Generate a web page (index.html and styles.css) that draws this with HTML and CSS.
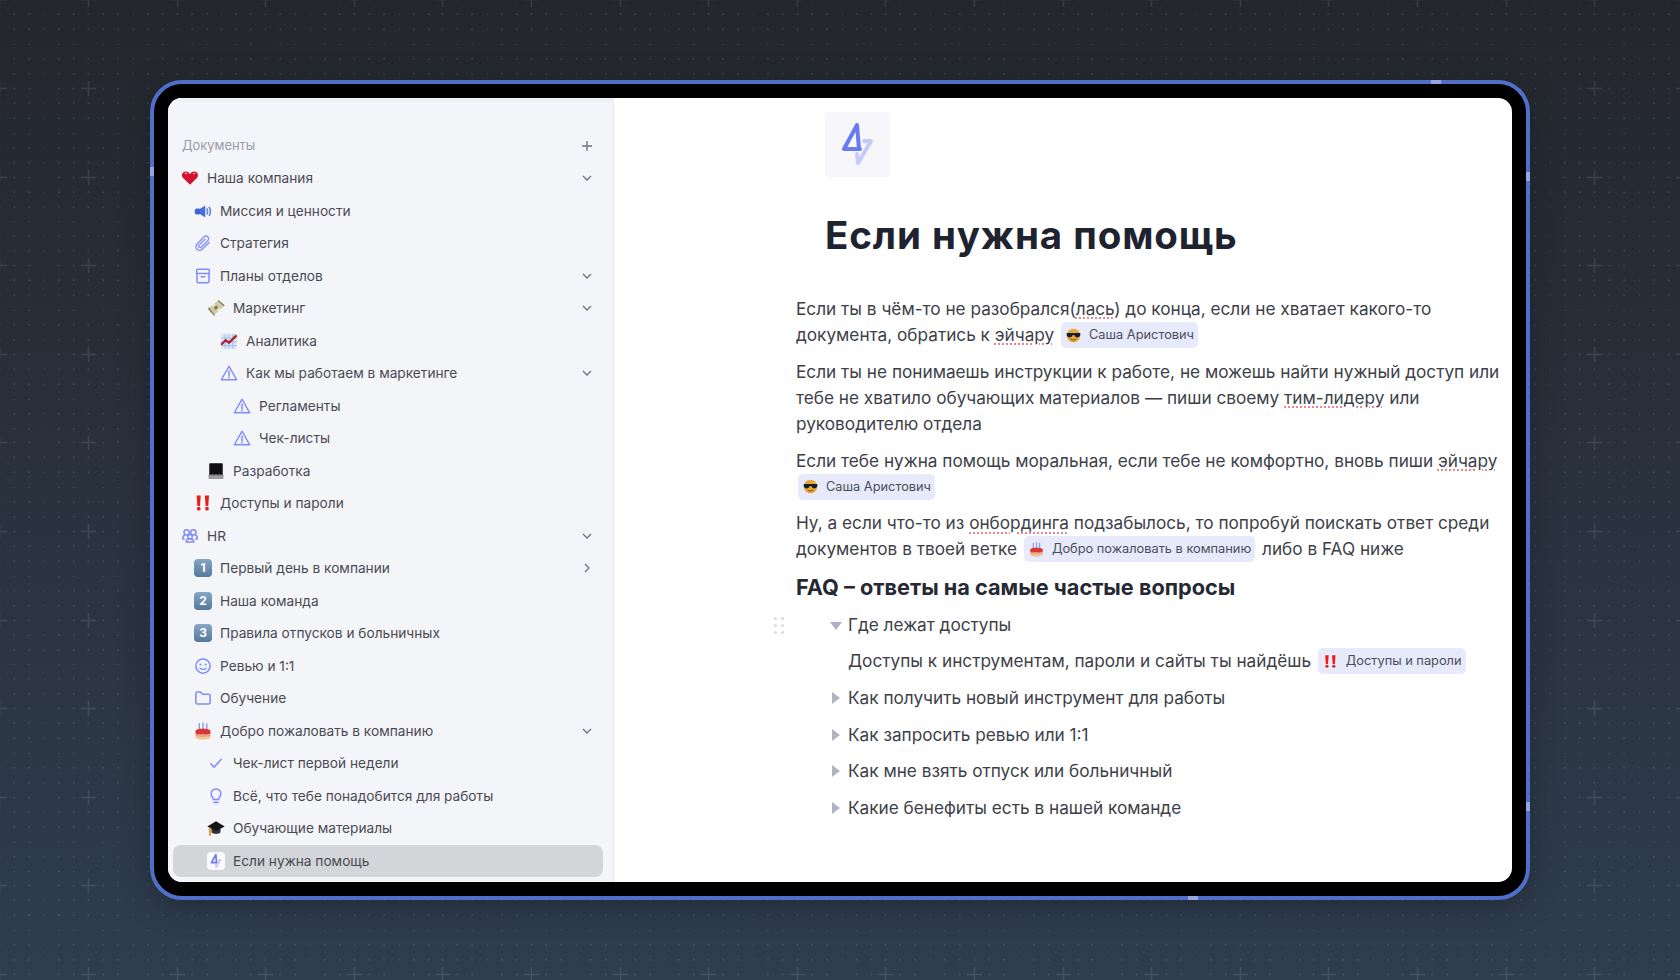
FILE: index.html
```html
<!DOCTYPE HTML><html lang="ru">
<head>
  <title>Если нужна помощь</title>
  <meta name="viewport" content="width=device-width, initial-scale=1">
  <link rel="stylesheet" href="styles.css">
</head>
<body>
  <svg class="sprite" aria-hidden="true">
    <symbol id="i-heart" viewBox="0 0 24 24"><path d="M12 21 2.500 11.500C.5 9 1 4.500 5 3.600 8 3 10.500 4.500 12 7c1.500-2.500 4-4 7-3.400 4 .9 4.500 5.400 2.500 7.900z" fill="#d2122e"/><path d="M5 6.500c1-1 2.500-1 3.500-.2M16 6.300c1-.6 2-.6 3 0" stroke="#f7a3ae" stroke-width="1.500" fill="none"/></symbol>
    <symbol id="i-horn" viewBox="0 0 24 24"><rect x="1" y="8.500" width="8" height="8" rx="3" fill="#3f63d8"/><path d="M8 9 15 4.500v16L8 16z" fill="#4a6ee0"/><path d="M17 8.500c1.500 2.500 1.500 5.500 0 8M20 6.500c2.300 3.500 2.300 8.500 0 12" stroke="#5c7de6" stroke-width="2" fill="none"/></symbol>
    <symbol id="i-clip" viewBox="0 0 24 24"><path d="M20 11.500 11.500 20c-2.300 2.300-5.600 2.300-7.500.4s-1.900-5.200.4-7.500L13.200 4c1.600-1.600 3.900-1.600 5.300-.2s1.400 3.700-.2 5.300l-8.400 8.400c-.9.9-2.200.9-3 .1s-.8-2.100.1-3l7.600-7.600" stroke="#8b97f5" stroke-width="2" fill="none" stroke-linecap="round"/></symbol>
    <symbol id="i-box" viewBox="0 0 24 24"><path d="M3.500 8.500V4.500a1.500 1.500 0 0 1 1.500-1.500h14a1.500 1.500 0 0 1 1.500 1.500v4zM4 8.500V19a2 2 0 0 0 2 2h12a2 2 0 0 0 2-2V8.500M9.500 13h5" stroke="#7f8cfb" stroke-width="2" fill="none" stroke-linecap="round" stroke-linejoin="round"/></symbol>
    <symbol id="i-money" viewBox="0 0 24 24"><path d="M1 13 15 2l8 7L9 22z" fill="#d3cba6"/><path d="M1 13l8 9 2 0L3 11z" fill="#8f8a6a"/><path d="M8 7.500 17 16" stroke="#f3ecca" stroke-width="4"/><circle cx="12" cy="11.500" r="2.700" fill="#86805c"/><path d="m15 2 8 7" stroke="#77795c" stroke-width="1.500"/></symbol>
    <symbol id="i-chart" viewBox="0 0 24 24"><rect x="1.500" y="2.500" width="21" height="20" fill="#dbe7f7"/><path d="M1.500 8h21M1.500 13h21M1.500 18h21M7 2.500v20M12 2.500v20M17 2.500v20" stroke="#8ab4e8" stroke-width="1"/><path d="m1.500 17 6-6 4.500 3.500 10-10" stroke="#b81c28" stroke-width="3" fill="none"/></symbol>
    <symbol id="i-warn" viewBox="0 0 24 24"><path d="M12 3 1.800 21h20.400z" stroke="#7f8cfb" stroke-width="2" fill="none" stroke-linejoin="round"/><path d="M12 9.500v6" stroke="#7f8cfb" stroke-width="2" stroke-linecap="round"/><circle cx="12" cy="18" r="1.200" fill="#7f8cfb"/></symbol>
    <symbol id="i-laptop" viewBox="0 0 24 24"><rect x="3" y="1.500" width="18" height="16" rx="1" fill="#101014"/><path d="M2 17h20v4.500a1 1 0 0 1-1 1H3a1 1 0 0 1-1-1z" fill="#9d9d9f"/><path d="M3 17h18" stroke="#55555a" stroke-width="1.500"/></symbol>
    <symbol id="i-bang" viewBox="0 0 24 24"><path d="M3.500 2h5.500l-1 14H4.500zM14.500 2H20l-1 14h-3.500z" fill="#ed1c17"/><circle cx="6.300" cy="19.500" r="2.500" fill="#ed1c17"/><circle cx="17.300" cy="19.500" r="2.500" fill="#ed1c17"/></symbol>
    <symbol id="i-people" viewBox="0 0 24 24"><g stroke="#7f8cfb" stroke-width="2" fill="none"><circle cx="7.500" cy="7" r="3.500"/><circle cx="16.500" cy="7" r="3.500"/><circle cx="12" cy="13" r="3"/><path d="M7 20c-.5-3 2-4.200 5-4.200s5.500 1.200 5 4.200zM5 16H2.500c-1-3 1-5 3-5M19 16h2.500c1-3-1-5-3-5"/></g></symbol>
    <symbol id="i-smile" viewBox="0 0 24 24"><circle cx="12" cy="12" r="9.500" stroke="#7f8cfb" stroke-width="2" fill="none"/><circle cx="8.500" cy="10" r="1.400" fill="#7f8cfb"/><circle cx="15.500" cy="10" r="1.400" fill="#7f8cfb"/><path d="M8 15c2 2 6 2 8 0" stroke="#7f8cfb" stroke-width="1.800" fill="none" stroke-linecap="round"/></symbol>
    <symbol id="i-folder" viewBox="0 0 24 24"><path d="M2.500 6a2 2 0 0 1 2-2h4.300l2.700 3h8a2 2 0 0 1 2 2v9a2 2 0 0 1-2 2h-15a2 2 0 0 1-2-2z" stroke="#7f8cfb" stroke-width="2" fill="none" stroke-linejoin="round"/></symbol>
    <symbol id="i-cake" viewBox="0 0 24 24"><path d="M7 1.500v9M12 .5v10M17 1.500v9" stroke="#8a96e6" stroke-width="1.800"/><path d="M2 13c0-3 4-4 10-4s10 1 10 4v6.500c0 2-4 3.500-10 3.500S2 21.500 2 19.500z" fill="#e9a77f"/><path d="M2 13c0-3 4-4 10-4s10 1 10 4c0 2.500-1.500 3.500-3 3s-2 1-3.500.6-2-1-3.500-.6-2.500.6-4 .1-2.500 1-4 .3S2 14.500 2 13z" fill="#d8353c"/><path d="M2.500 19.500c3 2 16 2 19 0" stroke="#f6d39b" stroke-width="1.800" fill="none"/></symbol>
    <symbol id="i-check" viewBox="0 0 24 24"><path d="m5 13 4.500 4.500L19 7" stroke="#7f8cfb" stroke-width="2" fill="none" stroke-linecap="round" stroke-linejoin="round"/></symbol>
    <symbol id="i-bulb" viewBox="0 0 24 24"><path d="M8.500 16.500c0-2-3-3.500-3-7.500a6.500 6.500 0 0 1 13 0c0 4-3 5.500-3 7.500z" stroke="#7f8cfb" stroke-width="2" fill="none" stroke-linejoin="round"/><path d="M9.500 20.500h5" stroke="#7f8cfb" stroke-width="2.200" stroke-linecap="round"/></symbol>
    <symbol id="i-cap" viewBox="0 0 24 24"><path d="M6 11v7c2 2.500 10 2.500 12 0v-7z" fill="#333337"/><path d="M12 3 .5 10 12 16 23.500 10z" fill="#141417"/><path d="M4 11.500V22.500" stroke="#e08a1e" stroke-width="2.200"/></symbol>
    <symbol id="i-bolt" viewBox="0 0 65 65"><path d="M39 29h7L33 51l-1-9" stroke="#c4cbfa" stroke-width="4" fill="none" stroke-linejoin="round" stroke-linecap="round"/><path d="M35 37H19l13-24 2 24" stroke="#6a7af0" stroke-width="4" fill="none" stroke-linejoin="round" stroke-linecap="round"/></symbol>
    <symbol id="i-bolt-s" viewBox="9 5 47 54"><path d="M39 29h7L33 51l-1-9" stroke="#c4cbfa" stroke-width="5" fill="none" stroke-linejoin="round" stroke-linecap="round"/><path d="M35 37H19l13-24 2 24" stroke="#6a7af0" stroke-width="5" fill="none" stroke-linejoin="round" stroke-linecap="round"/></symbol>
    <symbol id="i-cool" viewBox="0 0 24 24"><circle cx="12" cy="12" r="11" fill="#e8a93a"/><path d="M1.200 8h21.600v2.500c0 2.800-1.700 4.500-4.500 4.500s-4.300-1.500-5-3.800h-2.600c-.7 2.300-2.200 3.800-5 3.800s-4.500-1.700-4.500-4.500z" fill="#15202f"/><path d="M8 18c2.500 1.700 5.500 1.700 8 0" stroke="#7a4a12" stroke-width="1.600" fill="none" stroke-linecap="round"/></symbol>
  </svg>

  <div class="device">
    <span class="glint glint-left"></span>
    <span class="glint glint-right"></span>
    <span class="glint glint-right2"></span>
    <span class="glint glint-top"></span>
    <span class="glint glint-bottom"></span>
    <div class="screen">
      <aside class="sidebar">
        <div class="side-head">
          <span>Документы</span>
          <svg class="chev" viewBox="0 0 16 16"><path d="M8 3v10M3 8h10"/></svg>
        </div>
        <div class="row lvl0"><svg class="ico"><use href="#i-heart"/></svg><span>Наша компания</span><svg class="chev" viewBox="0 0 16 16"><path d="m4 6 4 4 4-4"/></svg></div>
        <div class="row lvl1"><svg class="ico"><use href="#i-horn"/></svg><span>Миссия и ценности</span></div>
        <div class="row lvl1"><svg class="ico"><use href="#i-clip"/></svg><span>Стратегия</span></div>
        <div class="row lvl1"><svg class="ico"><use href="#i-box"/></svg><span>Планы отделов</span><svg class="chev" viewBox="0 0 16 16"><path d="m4 6 4 4 4-4"/></svg></div>
        <div class="row lvl2"><svg class="ico"><use href="#i-money"/></svg><span>Маркетинг</span><svg class="chev" viewBox="0 0 16 16"><path d="m4 6 4 4 4-4"/></svg></div>
        <div class="row lvl3"><svg class="ico"><use href="#i-chart"/></svg><span>Аналитика</span></div>
        <div class="row lvl3"><svg class="ico"><use href="#i-warn"/></svg><span>Как мы работаем в маркетинге</span><svg class="chev" viewBox="0 0 16 16"><path d="m4 6 4 4 4-4"/></svg></div>
        <div class="row lvl4"><svg class="ico"><use href="#i-warn"/></svg><span>Регламенты</span></div>
        <div class="row lvl4"><svg class="ico"><use href="#i-warn"/></svg><span>Чек-листы</span></div>
        <div class="row lvl2"><svg class="ico"><use href="#i-laptop"/></svg><span>Разработка</span></div>
        <div class="row lvl1"><svg class="ico"><use href="#i-bang"/></svg><span>Доступы и пароли</span></div>
        <div class="row lvl0"><svg class="ico"><use href="#i-people"/></svg><span>HR</span><svg class="chev" viewBox="0 0 16 16"><path d="m4 6 4 4 4-4"/></svg></div>
        <div class="row lvl1"><span class="keycap">1</span><span>Первый день в компании</span><svg class="chev" viewBox="0 0 16 16"><path d="m6 4 4 4-4 4"/></svg></div>
        <div class="row lvl1"><span class="keycap">2</span><span>Наша команда</span></div>
        <div class="row lvl1"><span class="keycap">3</span><span>Правила отпусков и больничных</span></div>
        <div class="row lvl1"><svg class="ico"><use href="#i-smile"/></svg><span>Ревью и 1:1</span></div>
        <div class="row lvl1"><svg class="ico"><use href="#i-folder"/></svg><span>Обучение</span></div>
        <div class="row lvl1"><svg class="ico"><use href="#i-cake"/></svg><span>Добро пожаловать в компанию</span><svg class="chev" viewBox="0 0 16 16"><path d="m4 6 4 4 4-4"/></svg></div>
        <div class="row lvl2"><svg class="ico"><use href="#i-check"/></svg><span>Чек-лист первой недели</span></div>
        <div class="row lvl2"><svg class="ico"><use href="#i-bulb"/></svg><span>Всё, что тебе понадобится для работы</span></div>
        <div class="row lvl2"><svg class="ico"><use href="#i-cap"/></svg><span>Обучающие материалы</span></div>
        <div class="row lvl2 active"><svg class="ico ico-tile"><use href="#i-bolt-s"/></svg><span>Если нужна помощь</span></div>
      </aside>

      <main class="doc">
        <div class="doc-head">
          <div class="doc-icon"><svg><use href="#i-bolt"/></svg></div>
          <h1>Если нужна помощь</h1>
        </div>
        <p>Если ты в чём-то не разобрался(<u>лась</u>) до конца, если не хватает какого-то<br>документа, обратись к <u>эйчару</u> <span class="chip"><svg><use href="#i-cool"/></svg>Саша Аристович</span></p>
        <p>Если ты не понимаешь инструкции к работе, не можешь найти нужный доступ или<br>тебе не хватило обучающих материалов — пиши своему <u>тим-лидеру</u> или<br>руководителю отдела</p>
        <p>Если тебе нужна помощь моральная, если тебе не комфортно, вновь пиши <u>эйчару</u><br><span class="chip"><svg><use href="#i-cool"/></svg>Саша Аристович</span></p>
        <p>Ну, а если что-то из <u>онбординга</u> подзабылось, то попробуй поискать ответ среди<br>документов в твоей ветке <span class="chip"><svg><use href="#i-cake"/></svg>Добро пожаловать в компанию</span> либо в FAQ ниже</p>
        <h2>FAQ – ответы на самые частые вопросы</h2>
        <div class="toggle open">
          <span class="grip"><i></i><i></i><i></i><i></i><i></i><i></i></span>
          <span class="tri"></span>Где лежат доступы
        </div>
        <div class="toggle-body">Доступы к инструментам, пароли и сайты ты найдёшь <span class="chip"><svg><use href="#i-bang"/></svg>Доступы и пароли</span></div>
        <div class="toggle"><span class="tri"></span>Как получить новый инструмент для работы</div>
        <div class="toggle"><span class="tri"></span>Как запросить ревью или 1:1</div>
        <div class="toggle"><span class="tri"></span>Как мне взять отпуск или больничный</div>
        <div class="toggle"><span class="tri"></span>Какие бенефиты есть в нашей команде</div>
      </main>
    </div>
  </div>
</body>
</html>
```

FILE: styles.css
```css
html {
  font-family: Inter, "Noto Sans", sans-serif;
}
body {
  margin: 0;
  height: 980px;
  overflow: hidden;
  display: flex;
  justify-content: center;
  align-items: center;
  background-color: #2a3240;
  background-image:
    url("data:image/svg+xml,%3Csvg xmlns='http://www.w3.org/2000/svg' width='88.6' height='88.6'%3E%3Cpath d='M44.3 36.800v15M36.800 44.300h15' stroke='%23fff' stroke-opacity='.1' stroke-width='1.500'/%3E%3Cg fill='%23fff' fill-opacity='.1'%3E%3Ccircle cx='14.770' cy='14.770' r='1'/%3E%3Ccircle cx='29.530' cy='14.770' r='1'/%3E%3Ccircle cx='44.300' cy='14.770' r='1'/%3E%3Ccircle cx='59.070' cy='14.770' r='1'/%3E%3Ccircle cx='73.830' cy='14.770' r='1'/%3E%3Ccircle cx='14.770' cy='29.530' r='1'/%3E%3Ccircle cx='29.530' cy='29.530' r='1'/%3E%3Ccircle cx='44.300' cy='29.530' r='1'/%3E%3Ccircle cx='59.070' cy='29.530' r='1'/%3E%3Ccircle cx='73.830' cy='29.530' r='1'/%3E%3Ccircle cx='14.770' cy='44.300' r='1'/%3E%3Ccircle cx='29.530' cy='44.300' r='1'/%3E%3Ccircle cx='59.070' cy='44.300' r='1'/%3E%3Ccircle cx='73.830' cy='44.300' r='1'/%3E%3Ccircle cx='14.770' cy='59.070' r='1'/%3E%3Ccircle cx='29.530' cy='59.070' r='1'/%3E%3Ccircle cx='44.300' cy='59.070' r='1'/%3E%3Ccircle cx='59.070' cy='59.070' r='1'/%3E%3Ccircle cx='73.830' cy='59.070' r='1'/%3E%3Ccircle cx='14.770' cy='73.830' r='1'/%3E%3Ccircle cx='29.530' cy='73.830' r='1'/%3E%3Ccircle cx='44.300' cy='73.830' r='1'/%3E%3Ccircle cx='59.070' cy='73.830' r='1'/%3E%3Ccircle cx='73.830' cy='73.830' r='1'/%3E%3Ccircle cx='0' cy='14.770' r='1'/%3E%3Ccircle cx='0' cy='29.530' r='1'/%3E%3Ccircle cx='0' cy='59.070' r='1'/%3E%3Ccircle cx='0' cy='73.830' r='1'/%3E%3Ccircle cx='14.770' cy='0' r='1'/%3E%3Ccircle cx='29.530' cy='0' r='1'/%3E%3Ccircle cx='59.070' cy='0' r='1'/%3E%3Ccircle cx='73.830' cy='0' r='1'/%3E%3C/g%3E%3C/svg%3E"),
    linear-gradient(180deg, #24262d 0%, #2f3d4e 100%);
  background-size: 88.6px 88.6px, 100% 100%;
  background-position: 44.3px 44.3px, 0 0;
}
.sprite {
  width: 0;
  height: 0;
  position: absolute;
}
.device {
  position: relative;
  box-sizing: border-box;
  width: 1380px;
  height: 820px;
  padding: 14px;
  background: #000;
  border: 4px solid #4f6fc9;
  border-radius: 32px;
  box-shadow: 0 6px 30px rgba(20,24,32,.45);
}
.glint {
  position: absolute;
  background: #93a6de;
}
.glint-left { left: -4px; top: 83px; width: 4px; height: 9px; }
.glint-right { right: -4px; top: 88px; width: 4px; height: 9px; }
.glint-right2 { right: -4px; top: 718px; width: 4px; height: 9px; }
.glint-top { top: -4px; left: 1277px; width: 10px; height: 4px; }
.glint-bottom { bottom: -4px; left: 1034px; width: 10px; height: 4px; }
.screen {
  display: flex;
  height: 100%;
  background: #fff;
  border-radius: 14px;
  overflow: hidden;
}

/* sidebar */
.sidebar {
  box-sizing: border-box;
  flex: 0 0 446px;
  background: #f4f5f8;
  border-right: 1px solid #e9eaed;
  border-top: 4px solid #eef0f2;
  padding-top: 27.5px;
  font-size: 13.700px;
  color: #494b54;
}
.side-head {
  display: flex;
  align-items: center;
  justify-content: space-between;
  height: 32.5px;
  margin: 0 18px 0 14px;
  color: #9a9ea9;
  font-size: 12.900px;
}
.row {
  display: flex;
  align-items: center;
  height: 32.5px;
  margin: 0 10px 0 5px;
  padding-right: 8px;
  border-radius: 8px;
}
.lvl0 { padding-left: 8px; }
.lvl1 { padding-left: 21px; }
.lvl2 { padding-left: 34px; }
.lvl3 { padding-left: 47px; }
.lvl4 { padding-left: 60px; }
.row.active {
  background: #d4d5d9;
}
.ico {
  flex: none;
  width: 18px;
  height: 18px;
  margin-right: 8px;
}
.ico-tile {
  background: #fbfbff;
  border-radius: 4px;
}
.keycap {
  flex: none;
  box-sizing: border-box;
  width: 18px;
  height: 18px;
  margin-right: 8px;
  border-radius: 4px;
  background: linear-gradient(180deg, #86a6c4, #55789b);
  color: #fff;
  font-size: 12px;
  font-weight: 700;
  line-height: 18px;
  text-align: center;
}
.chev {
  flex: none;
  width: 16px;
  height: 16px;
  margin-left: auto;
  fill: none;
  stroke: #70737d;
  stroke-width: 1.300;
}

/* document */
.doc {
  flex: 1;
  box-sizing: border-box;
  padding: 14px 12px 0 182px;
  font-size: 17.220px;
  line-height: 26px;
  color: #3d3f49;
}
.doc-head {
  padding-left: 29px;
}
.doc-icon {
  width: 65px;
  height: 65px;
  border-radius: 4px;
  background: #f7f7fb;
}
.doc-icon svg {
  display: block;
  width: 65px;
  height: 65px;
}
h1 {
  margin: 34px 0 37px;
  font-size: 38.500px;
  line-height: 48px;
  font-weight: 700;
  letter-spacing: .9px;
  color: #1f2330;
}
h2 {
  margin: 10px 0 10.400px;
  font-size: 21.700px;
  line-height: 28px;
  font-weight: 700;
  color: #262934;
}
p {
  margin: 0 0 10.800px;
}
u {
  text-decoration: underline dotted #e8606a;
  text-underline-offset: 3px;
}
.chip {
  display: inline-flex;
  align-items: center;
  height: 26px;
  margin: 0 2px;
  padding: 0 4px 0 5px;
  vertical-align: bottom;
  border-radius: 5px;
  background: #e6eafb;
  font-size: 12.800px;
  color: #4a4d5a;
}
.chip svg {
  width: 15px;
  height: 15px;
  margin-right: 8px;
}
.toggle {
  position: relative;
  padding-left: 52px;
  margin-bottom: 10.700px;
}
.toggle-body {
  padding-left: 52px;
  margin-bottom: 10.700px;
}
.tri {
  position: absolute;
  left: 36px;
  top: 7px;
  width: 0;
  height: 0;
  border-left: 8px solid #b0b3c0;
  border-top: 6px solid transparent;
  border-bottom: 6px solid transparent;
}
.open .tri {
  left: 34px;
  top: 10px;
  border-top: 8px solid #aeb1c4;
  border-left: 6px solid transparent;
  border-right: 6px solid transparent;
  border-bottom: 0;
}
.grip {
  position: absolute;
  left: -22px;
  top: 5px;
  display: grid;
  grid-template-columns: 3px 3px;
  gap: 4px;
}
.grip i {
  width: 3px;
  height: 3px;
  border-radius: 50%;
  background: #d8d9e3;
}
```
